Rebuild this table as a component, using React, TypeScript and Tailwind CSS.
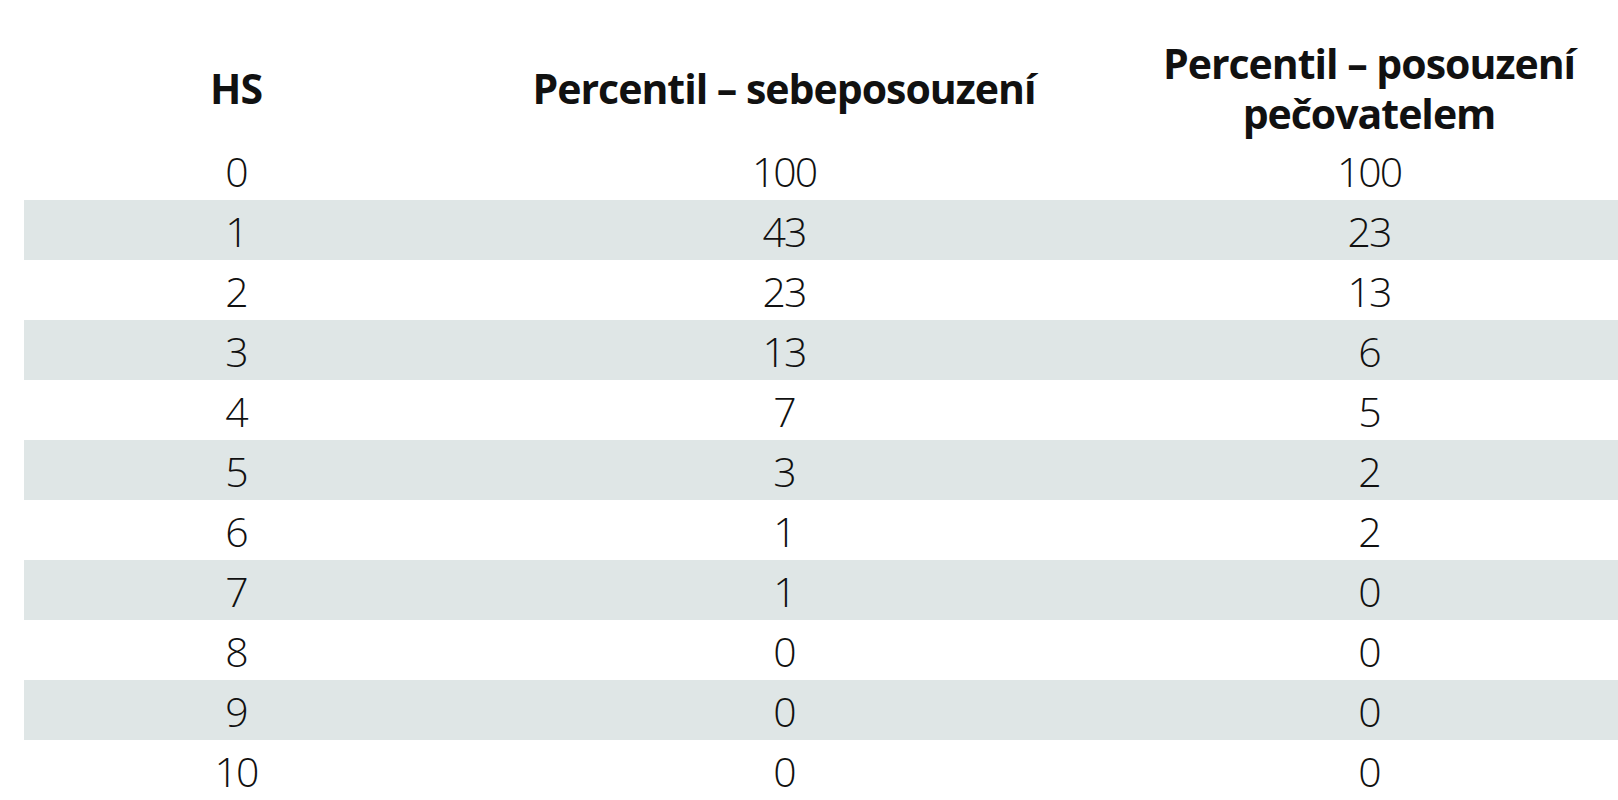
const ROWS: [number, number, number][] = [
  [0, 100, 100],
  [1, 43, 23],
  [2, 23, 13],
  [3, 13, 6],
  [4, 7, 5],
  [5, 3, 2],
  [6, 1, 2],
  [7, 1, 0],
  [8, 0, 0],
  [9, 0, 0],
  [10, 0, 0],
];

export default function App() {
  return (
    <div className="w-[1618px] h-[800px] overflow-hidden bg-white pl-[24px] text-[#111] font-['Open_Sans',sans-serif]">
      <table className="w-[1594px] border-collapse table-fixed">
        <colgroup>
          <col className="w-[424px]" />
          <col className="w-[672px]" />
          <col />
        </colgroup>
        <thead>
          <tr className="h-[140px]">
            <th className="text-center align-middle font-bold text-[41px] leading-[50px] tracking-[-1px] pt-[36px] pb-0">
              HS
            </th>
            <th className="text-center align-middle font-bold text-[41px] leading-[50px] tracking-[-1px] pt-[36px] pb-0">
              Percentil – sebeposouzení
            </th>
            <th className="text-center align-middle font-bold text-[41px] leading-[50px] tracking-[-1px] pt-[36px] pb-0">
              Percentil – posouzení
              <br />
              pečovatelem
            </th>
          </tr>
        </thead>
        <tbody>
          {ROWS.map(([hs, self, carer], i) => (
            <tr key={hs} className={i % 2 === 1 ? "h-[60px] bg-[#dfe6e6]" : "h-[60px]"}>
              <td className="text-center align-middle font-light text-[41px] leading-[58px] tracking-[-2px] pt-[2px] pb-0 px-0">{hs}</td>
              <td className="text-center align-middle font-light text-[41px] leading-[58px] tracking-[-2px] pt-[2px] pb-0 px-0">{self}</td>
              <td className="text-center align-middle font-light text-[41px] leading-[58px] tracking-[-2px] pt-[2px] pb-0 px-0">{carer}</td>
            </tr>
          ))}
        </tbody>
      </table>
    </div>
  );
}
